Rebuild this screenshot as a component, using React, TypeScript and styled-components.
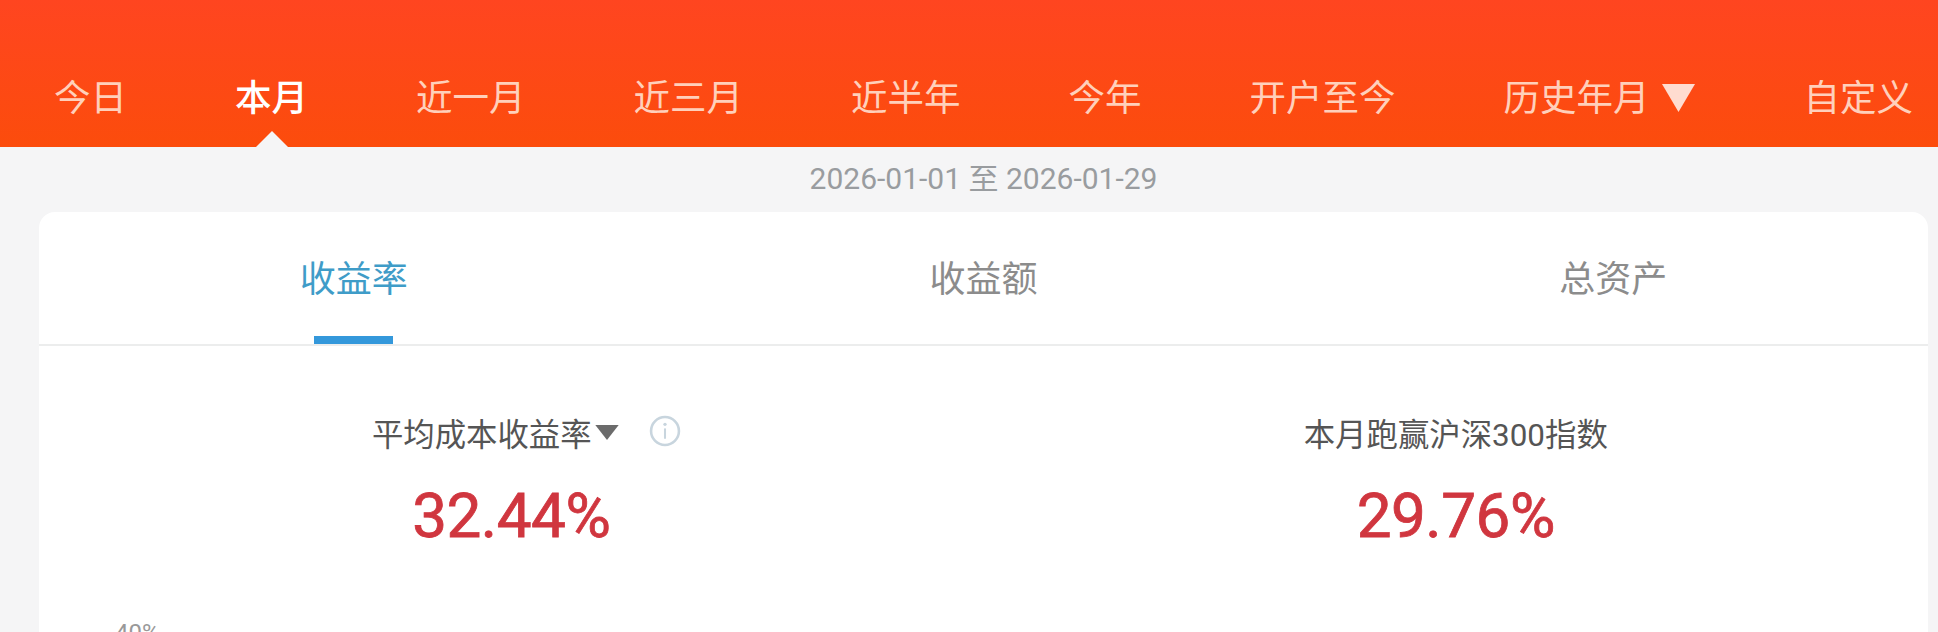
import styled, { createGlobalStyle } from 'styled-components'

const GlobalStyle = createGlobalStyle`
  html, body {
    margin: 0;
    padding: 0;
    height: 632px;
    overflow: hidden;
    background: #f5f5f6;
    font-family: Roboto, "Noto Sans CJK SC", sans-serif;
  }
`

const Page = styled.main`
  display: flex;
  flex-direction: column;
  height: 632px;
  overflow: hidden;
`

const Header = styled.nav`
  flex: none;
  display: flex;
  align-items: center;
  gap: 108px;
  height: 147px;
  box-sizing: border-box;
  padding: 75px 0 25px 54px;
  background: linear-gradient(180deg, #ff4520 0%, #fc4c0c 100%);
  white-space: nowrap;
`

const Period = styled.span<{ $active?: boolean }>`
  position: relative;
  font-size: 36.5px;
  line-height: 47px;
  color: ${({ $active }) => ($active ? '#ffffff' : '#ffd0bb')};
  font-weight: ${({ $active }) => ($active ? 500 : 400)};

  ${({ $active }) =>
    $active &&
    `&::after {
      content: '';
      position: absolute;
      left: 21px;
      bottom: -25px;
      border-left: 16px solid transparent;
      border-right: 16px solid transparent;
      border-bottom: 16px solid #f5f5f6;
    }`}
`

const Caret = styled.svg`
  width: 35px;
  height: 30px;
  margin-left: 11px;
  vertical-align: -2px;
`

const DateRange = styled.div`
  flex: none;
  height: 65px;
  padding: 14px 0 0 29px;
  box-sizing: border-box;
  text-align: center;
  font-size: 30px;
  line-height: 36px;
  color: #999c9f;
`

const Card = styled.section`
  flex: none;
  height: 440px;
  margin: 0 10px 0 39px;
  background: #fff;
  border-radius: 16px 16px 0 0;
`

const TabBar = styled.div`
  display: grid;
  grid-template-columns: repeat(3, 1fr);
  height: 134px;
  box-sizing: border-box;
  border-bottom: 2px solid #eceded;
`

const Tab = styled.div<{ $active?: boolean }>`
  position: relative;
  display: flex;
  justify-content: center;
  padding-top: 43px;
  font-size: 36px;
  line-height: 50px;
  color: ${({ $active }) => ($active ? '#3f9cc8' : '#8c8c8c')};

  ${({ $active }) =>
    $active &&
    `&::after {
      content: '';
      position: absolute;
      left: 50%;
      bottom: 0;
      width: 79px;
      height: 8px;
      margin-left: -40px;
      background: #3498db;
    }`}
`

const Stats = styled.div`
  display: grid;
  grid-template-columns: 1fr 1fr;
  padding-top: 69px;
`

const Stat = styled.div`
  display: flex;
  flex-direction: column;
  align-items: center;
`

const StatLabel = styled.div<{ $shift?: number }>`
  display: flex;
  align-items: center;
  height: 42px;
  margin-left: ${({ $shift }) => $shift ?? 0}px;
  font-size: 31.4px;
  line-height: 42px;
  color: #555;
`

const LabelCaret = styled.svg`
  width: 26px;
  height: 17px;
  margin: -8px 0 0 2px;
`

const InfoIcon = styled.svg`
  width: 32px;
  height: 32px;
  margin: -10px 0 0 29px;
`

const StatValue = styled.div`
  margin-top: 22px;
  font-size: 62px;
  line-height: 74px;
  letter-spacing: -0.5px;
  color: #d0363f;
  -webkit-text-stroke: 0.8px #d0363f;
`

const AxisLabel = styled.div`
  margin: 66px 0 0 76px;
  font-size: 24px;
  line-height: 28px;
  color: #999;
`

const periods = ['今日', '本月', '近一月', '近三月', '近半年', '今年', '开户至今']

const App = () => {
  return (
    <Page>
      <GlobalStyle />
      <Header>
        {periods.map((p) => (
          <Period key={p} $active={p === '本月'}>{p}</Period>
        ))}
        <Period>
          历史年月
          <Caret viewBox="0 0 35 30">
            <path d="M1 1h33L17.5 29z" fill="#ffdcd0" />
          </Caret>
        </Period>
        <Period>自定义</Period>
      </Header>
      <DateRange>2026-01-01 至 2026-01-29</DateRange>
      <Card>
        <TabBar>
          <Tab $active>收益率</Tab>
          <Tab>收益额</Tab>
          <Tab>总资产</Tab>
        </TabBar>
        <Stats>
          <Stat>
            <StatLabel $shift={30}>
              平均成本收益率
              <LabelCaret viewBox="0 0 24 16">
                <path d="M1 1h22L12 15z" fill="#6b6b6b" />
              </LabelCaret>
              <InfoIcon viewBox="0 0 31 31">
                <circle cx="15.5" cy="15.5" r="13.5" fill="none" stroke="#c8d5de" strokeWidth="2.5" />
                <circle cx="15.5" cy="9" r="1.6" fill="#c8d5de" />
                <path d="M15.5 13v10" stroke="#c8d5de" strokeWidth="2" />
              </InfoIcon>
            </StatLabel>
            <StatValue>32.44%</StatValue>
          </Stat>
          <Stat>
            <StatLabel>本月跑赢沪深300指数</StatLabel>
            <StatValue>29.76%</StatValue>
          </Stat>
        </Stats>
        <AxisLabel>40%</AxisLabel>
      </Card>
    </Page>
  )
}

export default App
